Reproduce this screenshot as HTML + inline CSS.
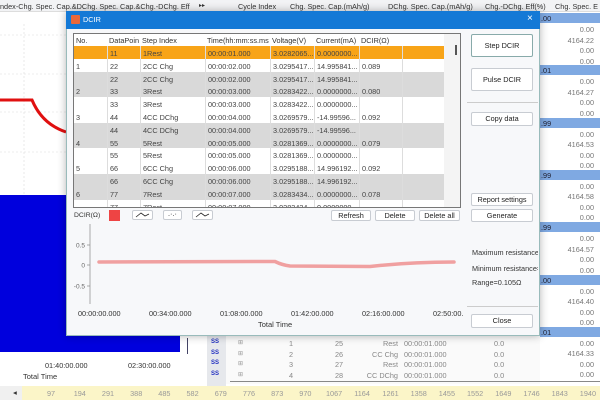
<!DOCTYPE html>
<html><head><meta charset="utf-8"><style>
*{box-sizing:border-box;margin:0;padding:0}
html,body{width:600px;height:400px;overflow:hidden}
body{position:relative;background:#fff;font-family:"Liberation Sans",sans-serif;font-size:7.3px;color:#333}
.a{position:absolute;white-space:nowrap}
.btn{position:absolute;border:1px solid #c8ccd2;border-radius:2px;background:#fff;text-align:center;font-size:7.3px;color:#222}
</style></head><body>
<div class="a" style="left:0;top:0;width:600px;height:12px;background:#f2f3f5;border-bottom:1px solid #ddd"></div>
<div class="a" style="left:0;top:2px">ndex-Chg. Spec. Cap.&amp;DChg. Spec. Cap.&amp;Chg.-DChg. Eff</div>
<div class="a" style="left:199px;top:2px;font-size:6px">▸▸</div>
<div class="a" style="left:238px;top:2px">Cycle Index</div>
<div class="a" style="left:290px;top:2px">Chg. Spec. Cap.(mAh/g)</div>
<div class="a" style="left:388px;top:2px">DChg. Spec. Cap.(mAh/g)</div>
<div class="a" style="left:485px;top:2px">Chg.-DChg. Eff(%)</div>
<div class="a" style="left:555px;top:2px">Chg. Spec. E</div>
<svg class="a" style="left:0;top:12px" width="200" height="340">
<g stroke="#ddd" stroke-dasharray="2,2" stroke-width="0.6">
<line x1="0" y1="23" x2="200" y2="23"/><line x1="0" y1="62" x2="200" y2="62"/><line x1="0" y1="100" x2="200" y2="100"/><line x1="0" y1="140" x2="200" y2="140"/><line x1="24" y1="12" x2="24" y2="185"/>
</g>
<path d="M0 88 H32 Q42 112 66 120" stroke="#e01010" stroke-width="3" fill="none"/>
<rect x="0" y="183" width="180" height="157" fill="#0000dd"/>
</svg>
<div class="a" style="left:187px;top:338px;width:1px;height:16px;background:#446"></div>
<div class="a" style="left:45px;top:361px">01:40:00.000</div>
<div class="a" style="left:128px;top:361px">02:30:00.000</div>
<div class="a" style="left:23px;top:372px;font-size:7.5px">Total Time</div>
<div class="a" style="left:540px;top:12px;width:60px;height:374px;background:#fff"></div>
<div id="rp"></div>
<div class="a" style="left:207px;top:336px;width:19px;height:50px;background:#e6e8ec"></div>
<div class="a" style="left:226px;top:336px;width:314px;height:48px;background:#fafafa"></div>
<div class="a" style="left:230px;top:381px;width:370px;height:1px;background:#888"></div>
<div id="bm"></div>
<div class="a" style="left:0;top:386px;width:600px;height:14px;background:#f0f0f0"></div>
<div class="a" style="left:22px;top:386px;width:578px;height:14px;background:#fbf5c8"></div>
<div class="a" style="left:13px;top:388px;color:#333">◂</div>
<div id="ft"></div>
<div class="a" style="left:66px;top:11px;width:474px;height:325px;background:#f7f8fa;border:1px solid #9bb;box-shadow:0 0 8px rgba(0,0,0,.3)"></div>
<div class="a" style="left:66px;top:11px;width:474px;height:18px;background:#1479d6"></div>
<div class="a" style="left:71px;top:15px;width:9px;height:9px;background:#e9683a;border-radius:1px"></div>
<div class="a" style="left:83px;top:15px;color:#fff">DCIR</div>
<div class="a" style="left:527px;top:13px;color:#fff;font-size:10px">×</div>
<div class="a" style="left:73px;top:33px;width:388px;height:175px;background:#fff;border:1px solid #777;overflow:hidden" id="tb"></div>
<div class="a" style="left:455px;top:45px;width:2px;height:10px;background:#555"></div>
<div class="a" style="left:74px;top:212px;font-size:6.8px">DCIR(Ω)</div>
<div class="a" style="left:109px;top:210px;width:11px;height:11px;background:#ee4444"></div>
<div class="btn" style="left:132px;top:210px;width:21px;height:10px"><svg width="19" height="8"><path d="M3 6 L8 2 L12 5 L16 3" stroke="#222" fill="none" stroke-width="0.8"/></svg></div>
<div class="btn" style="left:163px;top:210px;width:19px;height:10px;line-height:6px">.·.·</div>
<div class="btn" style="left:192px;top:210px;width:21px;height:10px"><svg width="19" height="8"><path d="M3 6 L8 2 L12 5 L16 3" stroke="#222" fill="none" stroke-width="0.8"/></svg></div>
<div class="btn" style="left:331px;top:210px;width:40px;height:11px;line-height:9px">Refresh</div>
<div class="btn" style="left:375px;top:210px;width:40px;height:11px;line-height:9px">Delete</div>
<div class="btn" style="left:419px;top:210px;width:41px;height:11px;line-height:9px">Delete all</div>
<svg class="a" style="left:70px;top:222px" width="395" height="110">
<line x1="20" y1="2" x2="20" y2="82" stroke="#888" stroke-width="0.7"/>
<g stroke="#888" stroke-width="0.7"><line x1="17" y1="23" x2="20" y2="23"/><line x1="17" y1="43" x2="20" y2="43"/><line x1="17" y1="64" x2="20" y2="64"/></g>
<text x="15" y="25.5" font-size="6.5" fill="#666" text-anchor="end" font-family="Liberation Sans">0.5</text>
<text x="15" y="45.5" font-size="6.5" fill="#666" text-anchor="end" font-family="Liberation Sans">0</text>
<text x="15" y="66.5" font-size="6.5" fill="#666" text-anchor="end" font-family="Liberation Sans">-0.5</text>
<path d="M29 40 L205 39.5 Q212 43 220 44 L300 44.5 Q340 40 384 40" stroke="#f0a0a0" stroke-width="3.5" fill="none" stroke-linecap="round"/>
</svg>
<div class="a" style="left:78px;top:309px">00:00:00.000</div>
<div class="a" style="left:149px;top:309px">00:34:00.000</div>
<div class="a" style="left:220px;top:309px">01:08:00.000</div>
<div class="a" style="left:291px;top:309px">01:42:00.000</div>
<div class="a" style="left:362px;top:309px">02:16:00.000</div>
<div class="a" style="left:433px;top:309px">02:50:00.</div>
<div class="a" style="left:258px;top:320px;font-size:7.5px">Total Time</div>
<div class="btn" style="left:471px;top:34px;width:62px;height:23px;line-height:21px;border-color:#8aa">Step DCIR</div>
<div class="btn" style="left:471px;top:68px;width:62px;height:23px;line-height:21px">Pulse DCIR</div>
<div class="a" style="left:467px;top:102px;width:71px;height:1px;background:#ccc"></div>
<div class="btn" style="left:471px;top:112px;width:62px;height:14px;line-height:12px">Copy data</div>
<div class="btn" style="left:471px;top:193px;width:62px;height:13px;line-height:11px">Report settings</div>
<div class="btn" style="left:471px;top:209px;width:62px;height:13px;line-height:11px">Generate</div>
<div class="a" style="left:472px;top:248px;width:66px;overflow:hidden">Maximum resistance=</div>
<div class="a" style="left:472px;top:264px;width:66px;overflow:hidden">Minimum resistance=</div>
<div class="a" style="left:472px;top:278px">Range=0.105Ω</div>
<div class="a" style="left:467px;top:306px;width:71px;height:1px;background:#ccc"></div>
<div class="btn" style="left:471px;top:314px;width:62px;height:14px;line-height:12px">Close</div>
<script>
var tb=document.getElementById('tb');
var cols=[2,35,68,133,198,242,287,330];
var h='<div style="position:absolute;left:0;top:0;width:100%;height:12px;background:#fff"></div>';
var hd=['No.','DataPoin','Step Index','Time(hh:mm:ss.ms','Voltage(V)','Current(mA)','DCIR(Ω)'];
hd.forEach(function(t,i){h+='<div class="a" style="left:'+cols[i]+'px;top:2px">'+t+'</div>'});
var rows=[['','11','1Rest','00:00:01.000','3.0282065...','0.0000000...',''],
['1','22','2CC Chg','00:00:02.000','3.0295417...','14.995841...','0.089'],
['','22','2CC Chg','00:00:02.000','3.0295417...','14.995841...',''],
['2','33','3Rest','00:00:03.000','3.0283422...','0.0000000...','0.080'],
['','33','3Rest','00:00:03.000','3.0283422...','0.0000000...',''],
['3','44','4CC DChg','00:00:04.000','3.0269579...','-14.99596...','0.092'],
['','44','4CC DChg','00:00:04.000','3.0269579...','-14.99596...',''],
['4','55','5Rest','00:00:05.000','3.0281369...','0.0000000...','0.079'],
['','55','5Rest','00:00:05.000','3.0281369...','0.0000000...',''],
['5','66','6CC Chg','00:00:06.000','3.0295188...','14.996192...','0.092'],
['','66','6CC Chg','00:00:06.000','3.0295188...','14.996192...',''],
['6','77','7Rest','00:00:07.000','3.0283434...','0.0000000...','0.078'],
['','77','7Rest','00:00:07.000','3.0283434...','0.0000000...','']];
var bg=['#f8a418','#fff','#d9d9d9','#d9d9d9','#fff','#fff','#d9d9d9','#d9d9d9','#fff','#fff','#d9d9d9','#d9d9d9','#fff'];
rows.forEach(function(r,j){var y=12+j*12.8;
h+='<div class="a" style="left:0;top:'+y+'px;width:370px;height:12.8px;background:'+bg[j]+'"></div>';
r.forEach(function(t,i){h+='<div class="a" style="left:'+(cols[i]+(i?1:0))+'px;top:'+(y+3)+'px;color:#444">'+t+'</div>'});});
[33,66,131,196,240,285,328,370].forEach(function(x){h+='<div class="a" style="left:'+x+'px;top:12px;width:1px;height:175px;background:#ddd"></div>'});
h+='<div class="a" style="left:370px;top:0;width:18px;height:175px;background:#f4f4f4"></div>';
tb.innerHTML=h;
var rp='',vals=[['0.00','4164.22','0.00','0.00'],['0.00','4164.27','0.00','0.00'],['0.00','4164.53','0.00','0.00'],['0.00','4164.58','0.00','0.00'],['0.00','4164.57','0.00','0.00'],['0.00','4164.40','0.00','0.00'],['0.00','4164.33','0.00','0.00']];
var hv=['.00','.01','.99','.99','.99','.00','.01'];
for(var g=0;g<7;g++){var y=13+g*52.3;
rp+='<div class="a" style="left:538px;top:'+y+'px;width:62px;height:10px;background:#7fa9e2"></div><div class="a" style="left:541px;top:'+(y+1)+'px;color:#223">'+hv[g]+'</div>';
for(var k=0;k<4;k++)rp+='<div class="a" style="right:6px;top:'+(y+12+k*10.5)+'px;color:#777">'+vals[g][k]+'</div>';}
document.getElementById('rp').innerHTML=rp;
var bm='',br=[['1','25','Rest'],['2','26','CC Chg'],['3','27','Rest'],['4','28','CC DChg']];
br.forEach(function(r,i){var y=339+i*10.5;
bm+='<div class="a" style="left:211px;top:'+y+'px;color:#2230c0;font-size:6px;font-weight:bold">SS</div><div class="a" style="left:238px;top:'+y+'px;color:#999;font-size:6px">⊞</div><div class="a" style="left:289px;top:'+y+'px;color:#888">'+r[0]+'</div><div class="a" style="left:335px;top:'+y+'px;color:#888">'+r[1]+'</div><div class="a" style="left:358px;top:'+y+'px;width:40px;text-align:right;color:#888">'+r[2]+'</div><div class="a" style="left:404px;top:'+y+'px;color:#888">00:00:01.000</div><div class="a" style="left:494px;top:'+y+'px;color:#888">0.0</div>';});
document.getElementById('bm').innerHTML=bm;
var ft='';for(var n=1;n<=20;n++){ft+='<div class="a" style="left:'+(50+(n-1)*28.2-String(97*n).length*1.5)+'px;top:389px;color:#999">'+(97*n)+'</div>';}
document.getElementById('ft').innerHTML=ft;
</script>
</body></html>
